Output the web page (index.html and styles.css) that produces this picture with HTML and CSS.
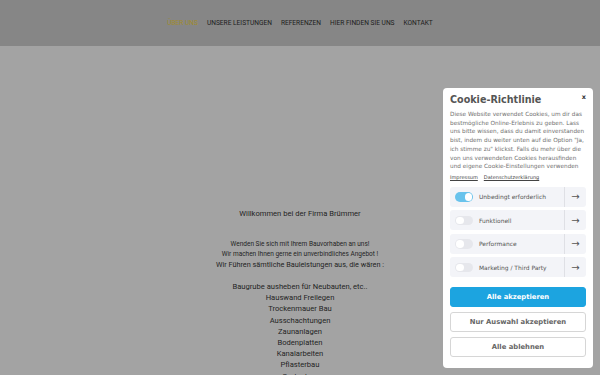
FILE: index.html
```html
<!DOCTYPE html>
<html lang="de">
<head>
<meta charset="utf-8">
<title>Brümmer</title>
<link rel="stylesheet" href="styles.css">
</head>
<body>
<header class="header">
  <nav class="nav">
    <a class="nav-link active">ÜBER UNS</a>
    <a class="nav-link">UNSERE LEISTUNGEN</a>
    <a class="nav-link">REFERENZEN</a>
    <a class="nav-link">HIER FINDEN SIE UNS</a>
    <a class="nav-link">KONTAKT</a>
  </nav>
</header>
<main class="main">
  <p class="welcome">Willkommen bei der Firma Brümmer</p>
  <p class="small">Wenden Sie sich mit Ihrem Bauvorhaben an uns!</p>
  <p class="small">Wir machen Ihnen gerne ein unverbindliches Angebot !</p>
  <p class="mid">Wir Führen sämtliche Bauleistungen aus, die wären :</p>
  <ul class="list">
    <li>Baugrube ausheben für Neubauten, etc..</li>
    <li>Hauswand Freilegen</li>
    <li>Trockenmauer Bau</li>
    <li>Ausschachtungen</li>
    <li>Zaunanlagen</li>
    <li>Bodenplatten</li>
    <li>Kanalarbeiten</li>
    <li>Pflasterbau</li>
    <li>Gartenbau</li>
  </ul>
</main>
<aside class="cookie">
  <div class="cookie-head">
    <h2 class="cookie-title">Cookie-Richtlinie</h2>
    <span class="cookie-close">x</span>
  </div>
  <p class="cookie-text">Diese Website verwendet Cookies, um dir das bestmögliche Online-Erlebnis zu geben. Lass uns bitte wissen, dass du damit einverstanden bist, indem du weiter unten auf die Option "Ja, ich stimme zu" klickst. Falls du mehr über die von uns verwendeten Cookies herausfinden und eigene Cookie-Einstellungen verwenden</p>
  <div class="cookie-links"><a>Impressum</a><a>Datenschutzerklärung</a></div>
  <div class="rows">
    <div class="row"><span class="toggle on"></span><span class="row-label">Unbedingt erforderlich</span><span class="row-arrow">&#8594;</span></div>
    <div class="row"><span class="toggle"></span><span class="row-label">Funktionell</span><span class="row-arrow">&#8594;</span></div>
    <div class="row"><span class="toggle"></span><span class="row-label">Performance</span><span class="row-arrow">&#8594;</span></div>
    <div class="row"><span class="toggle"></span><span class="row-label">Marketing / Third Party</span><span class="row-arrow">&#8594;</span></div>
  </div>
  <div class="buttons">
    <button class="btn primary">Alle akzeptieren</button>
    <button class="btn">Nur Auswahl akzeptieren</button>
    <button class="btn">Alle ablehnen</button>
  </div>
</aside>
</body>
</html>
```
FILE: styles.css
```css
html, body {
  margin: 0;
  padding: 0;
  height: 100%;
  overflow: hidden;
}
body {
  background: #a3a3a3;
  font-family: Roboto, "Liberation Sans", sans-serif;
  color: #232323;
}
.header {
  height: 46px;
  background: #868686;
  display: flex;
  justify-content: center;
  align-items: center;
}
.nav {
  display: flex;
  gap: 9px;
}
.nav-link {
  font-size: 6.6px;
  color: #202020;
}
.nav-link.active {
  color: #a08c2c;
}
.main {
  text-align: center;
  padding-top: 163px;
}
.main p {
  margin: 0;
}
.welcome {
  font-size: 7.6px;
  line-height: 10px;
  margin-bottom: 20px !important;
}
.small {
  font-size: 6.5px;
  line-height: 10px;
}
.mid {
  font-size: 7.3px;
  line-height: 12px;
}
.list {
  list-style: none;
  margin: 0;
  padding: 10px 0 0;
  font-size: 7.6px;
  line-height: 11.2px;
}
.cookie {
  position: fixed;
  right: 7px;
  top: 88px;
  width: 150px;
  height: 280px;
  box-sizing: border-box;
  background: #fff;
  border-radius: 4px;
  padding: 5px 7px 0 7px;
  font-family: "DejaVu Sans", Verdana, sans-serif;
  color: #666;
}
.cookie-head {
  display: flex;
  justify-content: space-between;
  align-items: flex-start;
}
.cookie-title {
  margin: 0;
  font-size: 9.6px;
  line-height: 13px;
  color: #555;
  font-weight: bold;
}
.cookie-close {
  font-size: 6.5px;
  font-weight: bold;
  color: #333;
}
.cookie-text {
  margin: 4px 0 0;
  font-size: 5.75px;
  line-height: 8.7px;
  color: #707070;
}
.cookie-links {
  display: flex;
  gap: 6px;
  margin-top: 2px;
  font-size: 5px;
  line-height: 8px;
  color: #444;
}
.cookie-links a {
  text-decoration: underline;
}
.rows {
  display: flex;
  flex-direction: column;
  gap: 3.5px;
  margin-top: 6px;
}
.row {
  height: 20px;
  background: #f3f4f8;
  border-radius: 3px;
  display: flex;
  align-items: center;
}
.toggle {
  width: 18px;
  height: 9.5px;
  border-radius: 5px;
  background: #e6e7ec;
  margin-left: 5px;
  position: relative;
}
.toggle::after {
  content: "";
  position: absolute;
  left: 1px;
  top: 1px;
  width: 7.5px;
  height: 7.5px;
  border-radius: 50%;
  background: #fff;
}
.toggle.on {
  background: #69c3ec;
}
.toggle.on::after {
  left: auto;
  right: 1px;
}
.row-label {
  flex: 1;
  margin-left: 6px;
  font-size: 5.95px;
  color: #555;
}
.row-arrow {
  width: 21px;
  height: 100%;
  border-left: 1px solid #dfe0e5;
  display: flex;
  align-items: center;
  justify-content: center;
  font-size: 10px;
  color: #555;
}
.buttons {
  display: flex;
  flex-direction: column;
  gap: 5px;
  margin-top: 10px;
}
.btn {
  height: 20px;
  border: 1px solid #d6d6d6;
  border-radius: 3px;
  background: #fff;
  font-family: "DejaVu Sans", Verdana, sans-serif;
  font-size: 6.8px;
  font-weight: bold;
  color: #666;
  padding: 0;
}
.btn.primary {
  background: #1ca4e0;
  border-color: #1ca4e0;
  color: #fff;
}
```
